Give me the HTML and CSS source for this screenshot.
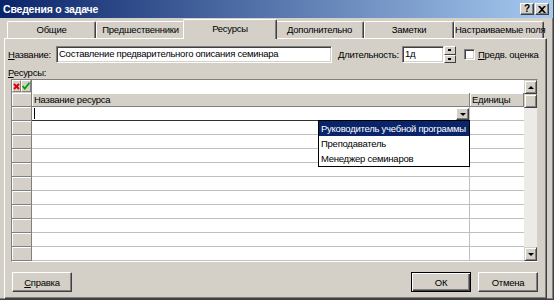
FILE: index.html
```html
<!DOCTYPE html>
<html>

<head>
    <meta charset="utf-8">
    <title>Сведения о задаче</title>
    <link rel="stylesheet" href="styles.css">
</head>

<body>
    <div class="dialog">
        <div class="titlebar">
            <span class="title">Сведения о задаче</span>
            <div class="caption-btns">
                <span class="cbtn">?</span>
                <span class="cbtn close">
                    <svg width="8" height="7" viewBox="0 0 8 7">
                        <path d="M0 0h2l2 2 2-2h2L5 3.5 8 7H6L4 5 2 7H0l3-3.5z" fill="#000"/>
                    </svg>
                </span>
            </div>
        </div>
        <div class="body">
            <div class="tabs">
                <div class="tab w89">Общие</div>
                <div class="tab w89">Предшественники</div>
                <div class="tab w90 active">Ресурсы</div>
                <div class="tab w89">Дополнительно</div>
                <div class="tab w90">Заметки</div>
                <div class="tab w90">Настраиваемые поля</div>
            </div>
            <div class="panel">
                <div class="field-row">
                    <label class="lbl-name"><u>Н</u>азвание:</label>
                    <div class="input name-input">Составление предварительного описания семинара</div>
                    <label class="lbl-dur"><u>Д</u>лительность:</label>
                    <div class="input dur-input">1д</div>
                    <div class="spinner">
                        <span class="spin up"></span>
                        <span class="spin down"></span>
                    </div>
                    <span class="checkbox"></span>
                    <label class="lbl-est"><u>П</u>редв. оценка</label>
                </div>
                <div class="lbl-res"><u>Р</u>есурсы:</div>
                <div class="grid">
                    <div class="grid-main">
                        <div class="editbar">
                            <div class="edit-icons">
                                <span class="ico">
                                    <svg width="7" height="7" viewBox="0 0 7 7">
                                        <path d="M1 1l5 5M6 1L1 6" stroke="#e00000" stroke-width="2"/>
                                    </svg>
                                </span>
                                <span class="ico">
                                    <svg width="8" height="8" viewBox="0 0 8 8">
                                        <path d="M0.5 4l2.3 2.6L7.5 0.8" stroke="#00a000" stroke-width="1.8" fill="none"/>
                                    </svg>
                                </span>
                            </div>
                            <div class="edit-input"></div>
                        </div>
                        <div class="grow header">
                            <div class="rh"></div>
                            <div class="ch">Название ресурса</div>
                            <div class="ch">Единицы</div>
                        </div>
                        <div class="grow first">
                            <div class="rh"></div>
                            <div class="cell name active-cell">
                                <span class="caret"></span>
                                <span class="drop-btn"><span class="tri-down"></span></span>
                            </div>
                            <div class="cell"></div>
                        </div>
                        <div class="grow"><div class="rh"></div><div class="cell name"></div><div class="cell"></div></div>
                        <div class="grow"><div class="rh"></div><div class="cell name"></div><div class="cell"></div></div>
                        <div class="grow"><div class="rh"></div><div class="cell name"></div><div class="cell"></div></div>
                        <div class="grow"><div class="rh"></div><div class="cell name"></div><div class="cell"></div></div>
                        <div class="grow"><div class="rh"></div><div class="cell name"></div><div class="cell"></div></div>
                        <div class="grow"><div class="rh"></div><div class="cell name"></div><div class="cell"></div></div>
                        <div class="grow"><div class="rh"></div><div class="cell name"></div><div class="cell"></div></div>
                        <div class="grow"><div class="rh"></div><div class="cell name"></div><div class="cell"></div></div>
                        <div class="grow"><div class="rh"></div><div class="cell name"></div><div class="cell"></div></div>
                        <div class="grow"><div class="rh"></div><div class="cell name"></div><div class="cell"></div></div>
                    </div>
                    <div class="vscroll">
                        <span class="sbtn"><span class="tri-up"></span></span>
                        <span class="thumb"></span>
                        <span class="track"></span>
                        <span class="sbtn"><span class="tri-down"></span></span>
                    </div>
                    <div class="dropdown">
                        <div class="item selected">Руководитель учебной программы</div>
                        <div class="item">Преподаватель</div>
                        <div class="item">Менеджер семинаров</div>
                    </div>
                </div>
                <div class="buttons">
                    <button class="btn"><u>С</u>правка</button>
                    <button class="btn default">ОК</button>
                    <button class="btn">Отмена</button>
                </div>
            </div>
        </div>
    </div>
</body>

</html>
```

FILE: styles.css
```css
* {
    box-sizing: border-box;
}

body {
    margin: 0;
    background: #ffffff;
    font-family: "Liberation Sans", Arial, sans-serif;
    font-size: 9.5px;
    letter-spacing: -0.25px;
    color: #000000;
}

u {
    text-decoration: underline;
}

.dialog {
    width: 554px;
    height: 300px;
    background: #d4d0c8;
    border-right: 1px solid #404040;
    border-bottom: 1px solid #404040;
    box-shadow: inset -1px -1px #808080;
}

/* title bar */

.titlebar {
    height: 18px;
    width: 553px;
    display: flex;
    align-items: center;
    justify-content: space-between;
    background: linear-gradient(to right, #0a246a, #a6caf0);
}

.title {
    padding-left: 3px;
    color: #ffffff;
    font-weight: bold;
    font-size: 10.5px;
    letter-spacing: -0.2px;
}

.caption-btns {
    display: flex;
    gap: 1px;
    padding-right: 4px;
}

.cbtn {
    width: 14px;
    height: 12px;
    display: flex;
    align-items: center;
    justify-content: center;
    background: #d4d0c8;
    border: 1px solid;
    border-color: #ffffff #404040 #404040 #ffffff;
    box-shadow: inset -1px -1px #808080;
    font-weight: bold;
    font-size: 10px;
    line-height: 1;
}

/* tabs */

.body {
    padding: 0 6px 0 4px;
}

.tabs {
    height: 20px;
    display: flex;
    align-items: flex-end;
    padding-left: 3px;
}

.tab {
    height: 17px;
    line-height: 15px;
    text-align: center;
    white-space: nowrap;
    border-top: 1px solid #ffffff;
    border-left: 1px solid #ffffff;
    border-right: 1px solid #404040;
    box-shadow: inset -1px 0 #808080;
    border-radius: 2px 2px 0 0;
}

.w89 {
    width: 89px;
}

.w90 {
    width: 90px;
}

.tab.active {
    position: relative;
    z-index: 1;
    height: 20px;
    width: 94px;
    margin: 0 -2px -1px;
    line-height: 17px;
    background: #d4d0c8;
}

.panel {
    height: 261px;
    border-top: 1px solid #ffffff;
    border-left: 1px solid #ffffff;
    border-right: 1px solid #404040;
    border-bottom: 1px solid #404040;
    box-shadow: inset -1px -1px #808080;
}

/* fields */

.field-row {
    display: flex;
    align-items: center;
    height: 17px;
    margin-top: 7px;
    padding-left: 3px;
}

.lbl-name {
    width: 48px;
}

.input {
    height: 17px;
    line-height: 13px;
    padding-left: 2px;
    background: #ffffff;
    white-space: nowrap;
    overflow: hidden;
    border: 1px solid;
    border-color: #808080 #ffffff #ffffff #808080;
    box-shadow: inset 1px 1px #404040, inset -1px -1px #d4d0c8;
}

.name-input {
    width: 276px;
}

.lbl-dur {
    width: 64px;
    margin-left: 6px;
}

.dur-input {
    width: 42px;
}

.spinner {
    width: 12px;
    height: 17px;
    display: flex;
    flex-direction: column;
}

.spin {
    flex: 1;
    position: relative;
    background: #d4d0c8;
    border: 1px solid;
    border-color: #ffffff #404040 #404040 #ffffff;
}

.spin::after {
    content: "";
    position: absolute;
    left: 3px;
    top: 2px;
    width: 3px;
    height: 2px;
    background: #000000;
}

.checkbox {
    width: 11px;
    height: 11px;
    margin-left: 8px;
    background: #ffffff;
    border: 1px solid;
    border-color: #808080 #ffffff #ffffff #808080;
    box-shadow: inset 1px 1px #404040, inset -1px -1px #d4d0c8;
}

.lbl-est {
    margin-left: 3px;
}

.lbl-res {
    margin-top: 4px;
    padding-left: 3px;
    height: 12px;
    line-height: 12px;
}

/* grid */

.grid {
    position: relative;
    display: flex;
    width: 527px;
    height: 183px;
    margin-left: 6px;
    border-top: 1px solid #808080;
    border-left: 1px solid #808080;
    border-right: 1px solid #d4d0c8;
    border-bottom: 1px solid #ffffff;
}

.grid-main {
    width: 512px;
}

.editbar {
    display: flex;
    height: 13px;
}

.edit-icons {
    width: 20px;
    display: flex;
    background: #d4d0c8;
    border-right: 1px solid #808080;
}

.ico {
    width: 10px;
    height: 12px;
    display: flex;
    align-items: center;
    justify-content: center;
    border: 1px solid;
    border-color: #ffffff #808080 #808080 #ffffff;
}

.edit-input {
    flex: 1;
    background: #ffffff;
}

.grow {
    display: grid;
    grid-template-columns: 20px 438px 54px;
    height: 14px;
}

.rh,
.ch {
    background: #d4d0c8;
    border-right: 1px solid #808080;
    border-bottom: 1px solid #808080;
    box-shadow: inset 1px 1px #ffffff;
}

.ch {
    padding-left: 2px;
    line-height: 13px;
    white-space: nowrap;
}

.cell {
    background: #ffffff;
    border-bottom: 1px solid #c0c0c0;
}

.cell.name {
    border-right: 1px solid #c0c0c0;
}

.active-cell {
    position: relative;
    border-bottom: 1px solid #303030;
}

.caret {
    position: absolute;
    left: 2px;
    top: 1px;
    width: 1px;
    height: 11px;
    background: #000000;
}

.drop-btn {
    position: absolute;
    right: 0;
    top: 1px;
    width: 13px;
    height: 12px;
    display: flex;
    align-items: center;
    justify-content: center;
    background: #d4d0c8;
    border: 1px solid;
    border-color: #ffffff #404040 #404040 #ffffff;
    box-shadow: inset -1px -1px #808080;
}

.tri-down,
.tri-up {
    width: 0;
    height: 0;
    border-left: 3px solid transparent;
    border-right: 3px solid transparent;
}

.tri-down {
    border-top: 3px solid #000000;
}

.tri-up {
    border-bottom: 3px solid #000000;
}

.vscroll {
    width: 13px;
    display: flex;
    flex-direction: column;
    background: #ecebe8;
}

.sbtn,
.thumb {
    display: flex;
    align-items: center;
    justify-content: center;
    background: #d4d0c8;
    border: 1px solid;
    border-color: #d4d0c8 #404040 #404040 #d4d0c8;
    box-shadow: inset 1px 1px #ffffff, inset -1px -1px #808080;
}

.sbtn {
    height: 14px;
}

.thumb {
    height: 14px;
}

.track {
    flex: 1;
}

.dropdown {
    position: absolute;
    left: 306px;
    top: 40px;
    width: 152px;
    background: #ffffff;
    border: 1px solid #000000;
}

.item {
    height: 15px;
    line-height: 15px;
    padding-left: 2px;
    white-space: nowrap;
}

.item.selected {
    background: #0a246a;
    color: #ffffff;
}

/* buttons */

.buttons {
    display: flex;
    gap: 7px;
    margin-top: 10px;
    padding: 0 8px 0 7px;
}

.btn {
    width: 60px;
    height: 20px;
    padding: 0;
    font-family: inherit;
    font-size: 9.5px;
    letter-spacing: -0.25px;
    color: #000000;
    background: #d4d0c8;
    border: 1px solid;
    border-color: #ffffff #404040 #404040 #ffffff;
    box-shadow: inset -1px -1px #808080;
}

.btn.default {
    margin-left: auto;
    border-color: #000000;
    box-shadow: inset 1px 1px #ffffff, inset -1px -1px #404040, inset -2px -2px #808080;
}
```
